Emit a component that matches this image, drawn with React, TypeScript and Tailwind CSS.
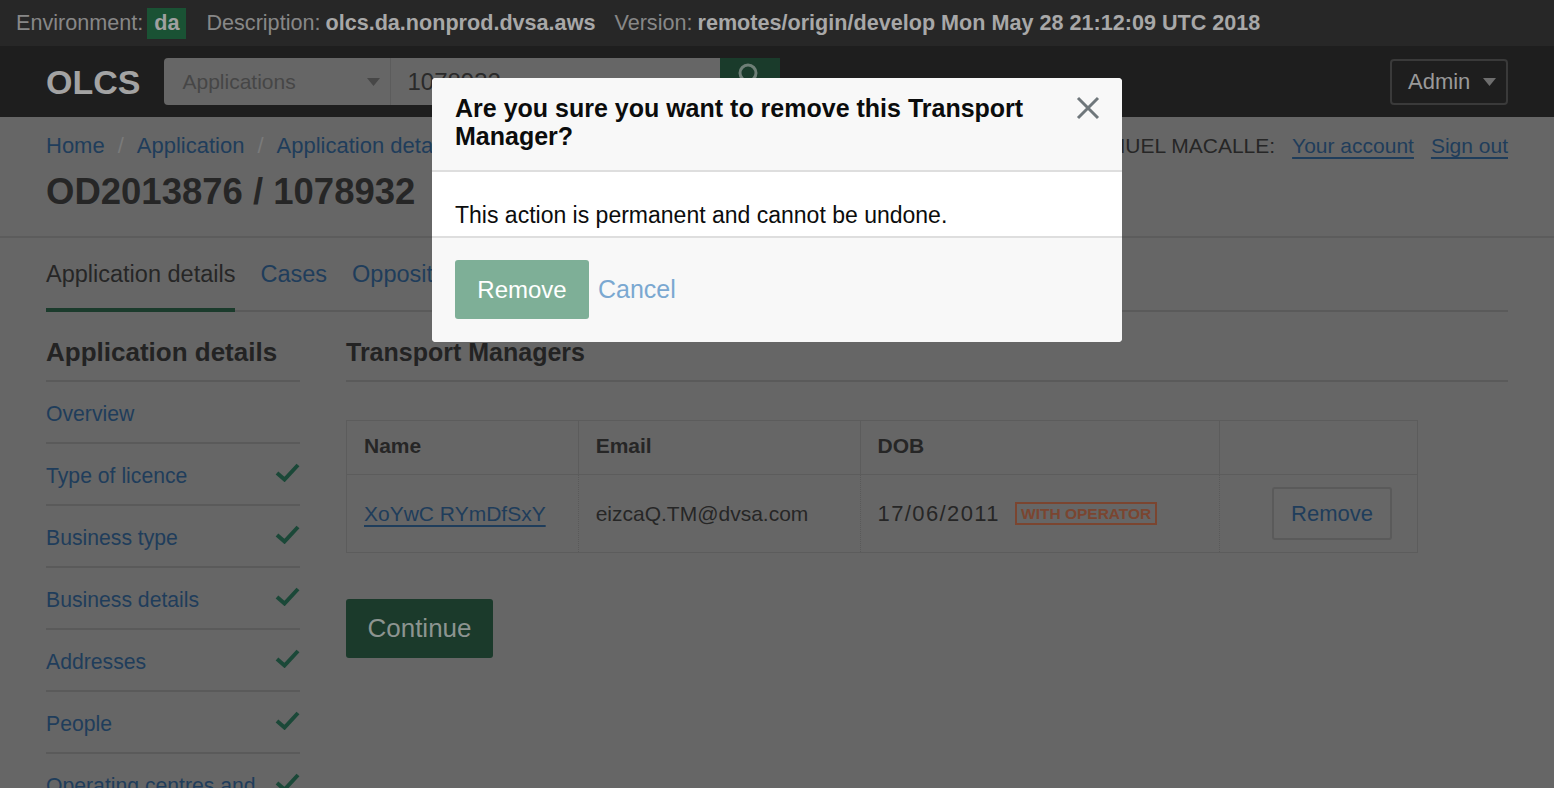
import React from "react";

const sidebarItems = [
  { label: "Overview", done: false },
  { label: "Type of licence", done: true },
  { label: "Business type", done: true },
  { label: "Business details", done: true },
  { label: "Addresses", done: true },
  { label: "People", done: true },
  { label: "Operating centres and authorisation", done: true },
  { label: "Financial evidence", done: true },
];

const tabs = ["Application details", "Cases", "Opposition", "Processing", "Fees", "Documents", "Notes"];

function Check() {
  return (
    <svg width="25" height="19" viewBox="0 0 25 19" className="shrink-0 mt-[1px]">
      <path d="M2 10 L9.5 16.5 L23 2" fill="none" stroke="#1b4838" strokeWidth="4" />
    </svg>
  );
}

function Caret({ color }: { color: string }) {
  return (
    <svg width="13" height="8" viewBox="0 0 13 8">
      <path d="M0 0 H13 L6.5 8 Z" fill={color} />
    </svg>
  );
}

export default function App() {
  return (
    <div className="relative min-h-screen bg-[#666666] font-['Liberation_Sans',Arial,sans-serif] overflow-hidden">
      {/* environment bar */}
      <div className="h-[46px] bg-[#272727] flex items-center px-4 text-[21.6px] text-[#878787] whitespace-nowrap">
        <span>Environment:</span>
        <span className="ml-[4px] h-[31px] px-[7px] flex items-center bg-[#1a5234] text-[#a0a0a0] font-bold">da</span>
        <span className="ml-5">Description:</span>
        <span className="ml-[5px] font-bold text-[#a8a8a8]">olcs.da.nonprod.dvsa.aws</span>
        <span className="ml-[19px]">Version:</span>
        <span className="ml-[5px] font-bold text-[#a8a8a8]">remotes/origin/develop Mon May 28 21:12:09 UTC 2018</span>
      </div>

      {/* header */}
      <div className="h-[71px] bg-[#1e1e1e] flex items-center px-[46px]">
        <span className="text-[34px] font-bold text-[#a3a3a3] leading-none">OLCS</span>
        <div className="ml-6 flex h-[47px]">
          <div className="w-[226px] bg-[#666666] rounded-l-[4px] flex items-center justify-between pl-[18px] pr-[10px]">
            <span className="text-[21px] text-[#464646]">Applications</span>
            <Caret color="#474747" />
          </div>
          <div className="w-[330px] bg-[#666666] border-l border-[#5c5c5c] flex items-center pl-4">
            <span className="text-[24px] text-[#2a2a2a]">1078932</span>
          </div>
          <div className="w-[60px] bg-[#1a3b2b] flex items-start justify-center pt-[4px]">
            <svg width="26" height="26" viewBox="0 0 26 26">
              <circle cx="11" cy="11" r="8" fill="none" stroke="#6f7f77" strokeWidth="3" />
              <path d="M17 17 L24 24" stroke="#6f7f77" strokeWidth="3" />
            </svg>
          </div>
        </div>
        <div className="ml-auto h-[46px] w-[118px] border-2 border-[#3a3a3a] rounded-[4px] flex items-center justify-between pl-[16px] pr-[10px]">
          <span className="text-[22px] text-[#999999]">Admin</span>
          <Caret color="#6e6e6e" />
        </div>
      </div>

      {/* page heading band */}
      <div className="px-[46px] pt-[15px] pb-[24px] border-b-2 border-[#5c5c5c]">
        <div className="flex items-center justify-between leading-[28px]">
          <div className="flex items-center text-[22px] text-[#1f3d5b]">
            <span>Home</span>
            <span className="mx-[13px] text-[#7a7a7a]">/</span>
            <span>Application</span>
            <span className="mx-[13px] text-[#7a7a7a]">/</span>
            <span>Application details</span>
          </div>
          <div className="flex items-center gap-[17px] text-[21px]">
            <span className="text-[#262626]">SAMUEL MACALLE:</span>
            <span className="text-[#1f3d5b] underline underline-offset-4">Your account</span>
            <span className="text-[#1f3d5b] underline underline-offset-4">Sign out</span>
          </div>
        </div>
        <h1 className="mt-3 text-[36.5px] leading-[40px] font-bold text-[#262626]">OD2013876 / 1078932</h1>
      </div>

      {/* tabs */}
      <div className="mx-[46px] flex gap-[25px] border-b-2 border-[#5a5a5a]">
        {tabs.map((t, i) => (
          <div
            key={t}
            className={
              "pt-[22px] pb-[20px] -mb-[2px] border-b-4 text-[23.5px] leading-[28px] " +
              (i === 0 ? "border-[#1b3b2c] text-[#262626]" : "border-transparent text-[#1f3d5b]")
            }
          >
            {t}
          </div>
        ))}
      </div>

      {/* body */}
      <div className="mx-[46px] flex gap-[46px]">
        <aside className="w-[254px] shrink-0">
          <h2 className="pt-6 pb-3 text-[26px] leading-[32px] font-bold text-[#232323] border-b-2 border-[#5a5a5a]">
            Application details
          </h2>
          {sidebarItems.map((it) => (
            <div
              key={it.label}
              className="flex items-start justify-between gap-2 pt-[18px] pb-[14px] border-b-2 border-[#5a5a5a]"
            >
              <span className="text-[21.2px] leading-[28px] text-[#1f3d5b]">{it.label}</span>
              {it.done && <Check />}
            </div>
          ))}
        </aside>

        <main className="flex-1">
          <h2 className="pt-6 pb-3 text-[25px] leading-[32px] font-bold text-[#232323] border-b-2 border-[#5a5a5a]">
            Transport Managers
          </h2>

          <table className="mt-[38px] w-[1072px] border border-[#5c5c5c] border-collapse text-[21px] text-[#262626]">
            <thead>
              <tr className="h-[54px]">
                <th className="w-[232px] px-[17px] pb-[4px] text-left font-bold border-r border-b border-[#5c5c5c]">Name</th>
                <th className="w-[282px] px-[17px] pb-[4px] text-left font-bold border-r border-b border-[#5c5c5c]">Email</th>
                <th className="w-[360px] px-[17px] pb-[4px] text-left font-bold border-r border-b border-[#5c5c5c]">DOB</th>
                <th className="w-[198px] border-b border-[#5c5c5c]"></th>
              </tr>
            </thead>
            <tbody>
              <tr className="h-[78px]">
                <td className="px-[17px] border-r border-dotted border-[#595959]">
                  <span className="text-[#1f3d5b] underline underline-offset-4">XoYwC RYmDfSxY</span>
                </td>
                <td className="px-[17px] border-r border-dotted border-[#595959]">eizcaQ.TM@dvsa.com</td>
                <td className="px-[17px] border-r border-dotted border-[#595959]">
                  <div className="flex items-center gap-[15px]">
                    <span className="text-[22px] tracking-[1.4px]">17/06/2011</span>
                    <span className="h-[23px] px-[4px] flex items-center border-2 border-[#7b4530] text-[#7b4530] text-[15.5px] font-bold uppercase">
                      With operator
                    </span>
                  </div>
                </td>
                <td className="pr-[25px] text-right">
                  <button className="h-[53px] w-[120px] border-2 border-[#5a5a5a] rounded-[3px] bg-[#676767] text-[22px] text-[#1f3d5b]">
                    Remove
                  </button>
                </td>
              </tr>
            </tbody>
          </table>

          <button className="mt-[46px] h-[59px] w-[147px] rounded-[3px] bg-[#1b3a2b] text-[26px] text-[#8c9490]">
            Continue
          </button>
        </main>
      </div>

      {/* confirmation modal */}
      <div className="absolute left-[432px] top-[78px] w-[690px] rounded-[4px] overflow-hidden bg-white">
        <div className="flex items-start justify-between bg-[#f8f8f8] pl-[23px] pr-[22px] pt-4 pb-5 border-b-2 border-[#dedede]">
          <h2 className="w-[590px] text-[25px] leading-[28px] font-bold text-[#0b0c0c]">
            Are you sure you want to remove this Transport Manager?
          </h2>
          <svg width="24" height="24" viewBox="0 0 24 24" className="mt-[2px]">
            <path d="M2 2 L22 22 M22 2 L2 22" stroke="#6f777b" strokeWidth="3" />
          </svg>
        </div>
        <div className="bg-white px-[23px] pt-[29px] pb-[7px] border-b-2 border-[#dedede]">
          <p className="text-[23px] leading-[28px] text-[#0b0c0c]">This action is permanent and cannot be undone.</p>
        </div>
        <div className="bg-[#f8f8f8] px-[23px] pt-[22px] pb-[23px] flex items-center gap-[9px]">
          <button className="h-[59px] w-[134px] rounded-[3px] bg-[#7eaf97] text-[24px] text-white">Remove</button>
          <span className="text-[25px] text-[#7ba8d1]">Cancel</span>
        </div>
      </div>
    </div>
  );
}
